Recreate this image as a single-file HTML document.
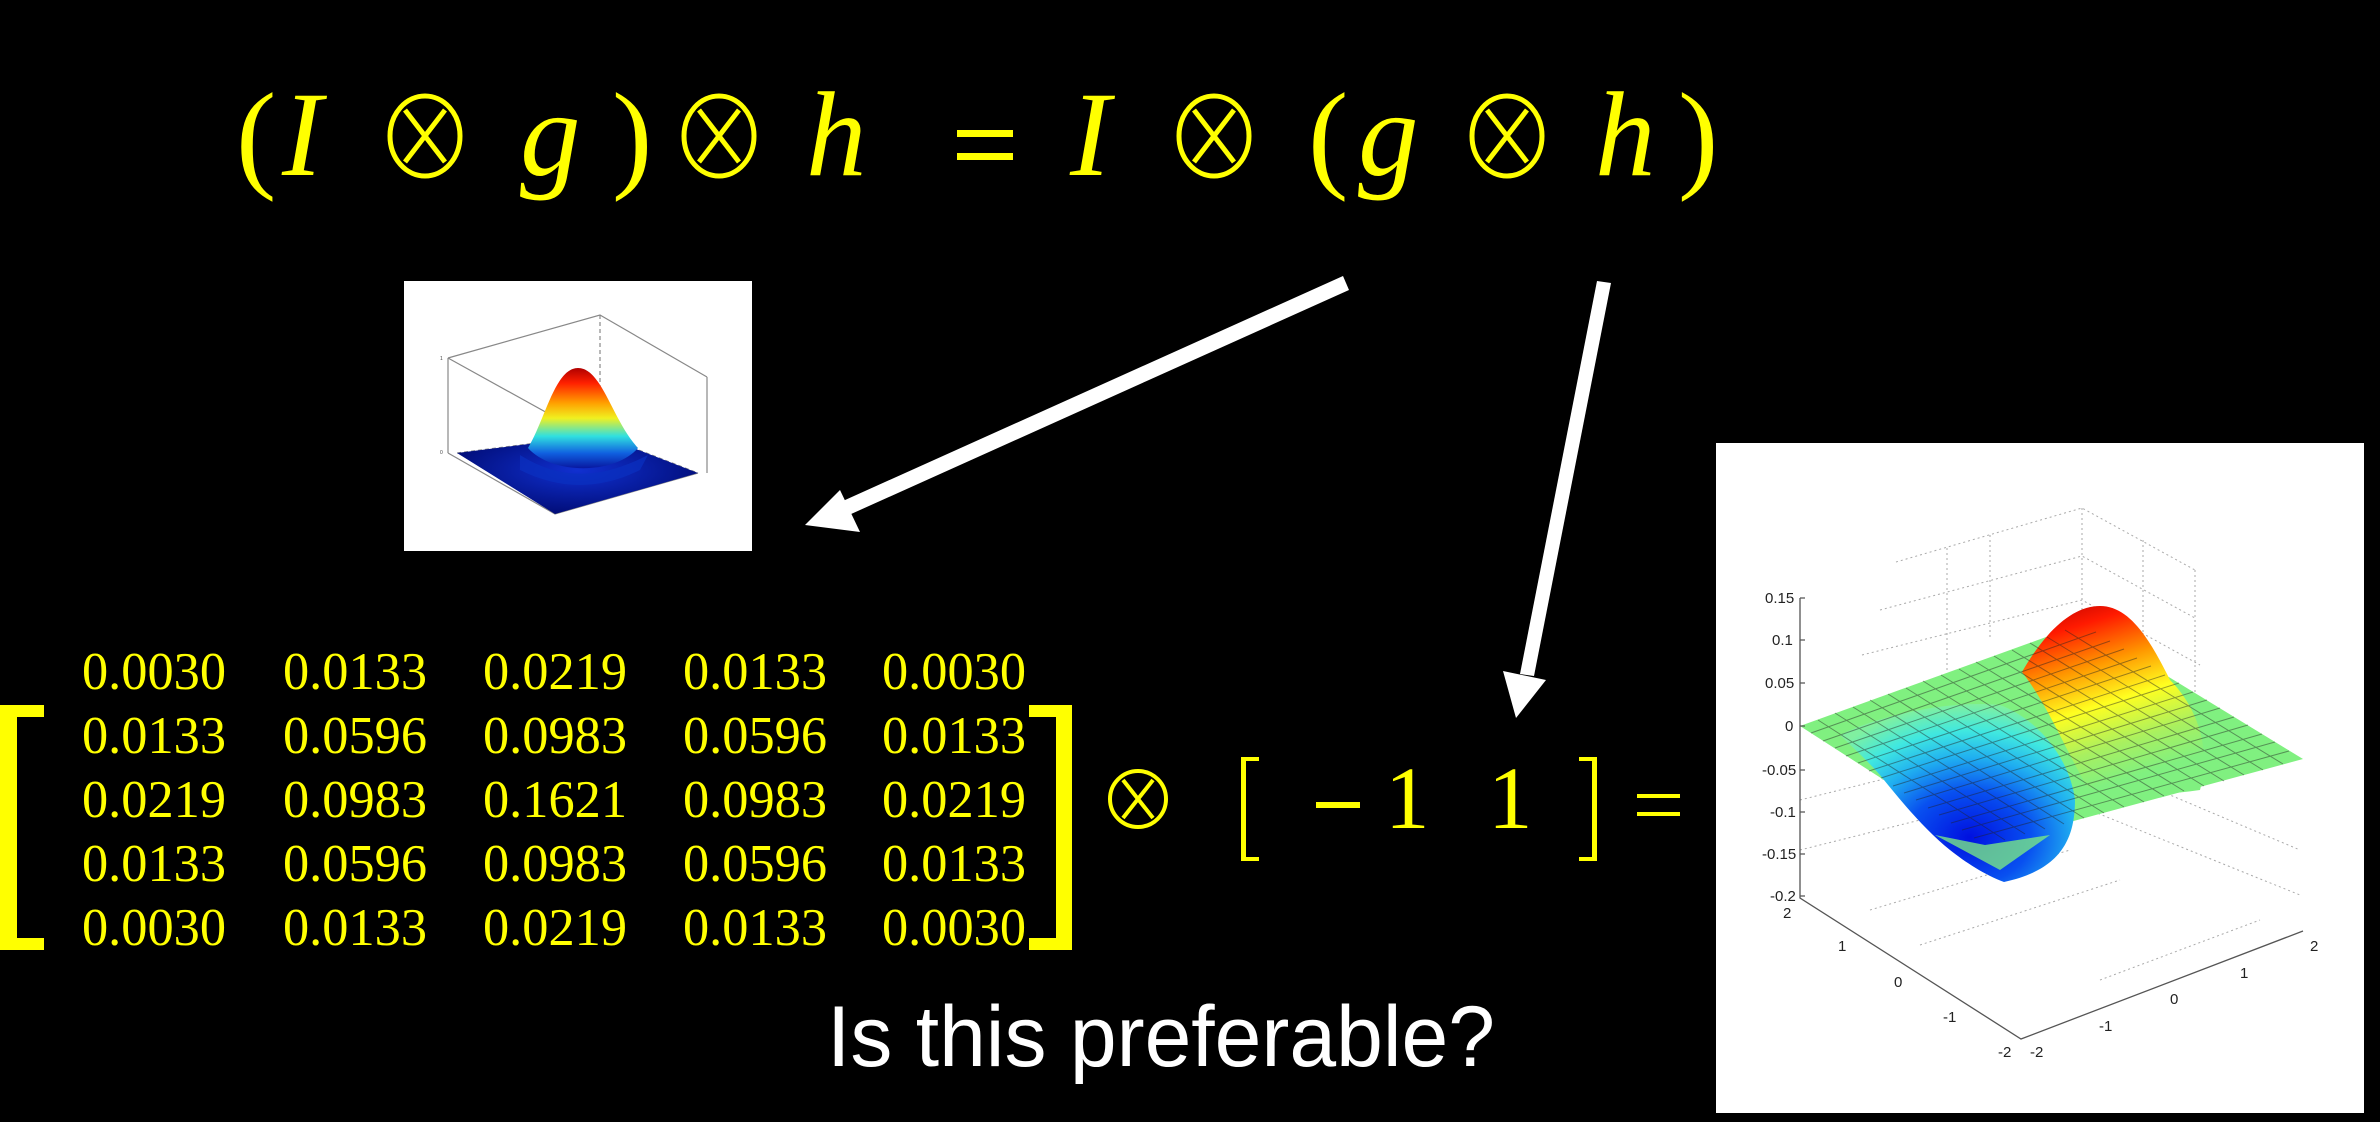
<!DOCTYPE html>
<html><head><meta charset="utf-8"><style>
html,body{margin:0;padding:0;background:#000;}
svg{display:block}
</style></head><body>
<svg width="2380" height="1122" viewBox="0 0 2380 1122" xmlns="http://www.w3.org/2000/svg">
<defs>
<linearGradient id="peak" x1="0" y1="0" x2="0.3" y2="1">
<stop offset="0" stop-color="#b80000"/><stop offset="0.18" stop-color="#ff1a00"/><stop offset="0.4" stop-color="#ff9900"/><stop offset="0.6" stop-color="#ffff20"/><stop offset="0.82" stop-color="#a8f060"/><stop offset="1" stop-color="#80f080"/>
</linearGradient>
<radialGradient id="trough" cx="0.55" cy="0.75" r="0.75">
<stop offset="0" stop-color="#0010e0"/><stop offset="0.35" stop-color="#0850f0"/><stop offset="0.6" stop-color="#20b0f0"/><stop offset="0.8" stop-color="#40e8e0"/><stop offset="1" stop-color="#80f0a0"/>
</radialGradient>
<linearGradient id="gpeak" x1="0" y1="0" x2="0" y2="1">
<stop offset="0" stop-color="#b00000"/><stop offset="0.15" stop-color="#ff2000"/><stop offset="0.35" stop-color="#ffa000"/><stop offset="0.5" stop-color="#f0f020"/><stop offset="0.68" stop-color="#30e0e0"/><stop offset="0.85" stop-color="#1060e0"/><stop offset="1" stop-color="#0818a0"/>
</linearGradient>
<radialGradient id="gbase" cx="0.5" cy="0.45" r="0.6">
<stop offset="0" stop-color="#1030d0"/><stop offset="1" stop-color="#000a70"/>
</radialGradient>
</defs>
<rect width="2380" height="1122" fill="#000"/>

<g fill="#ffff00" font-family="Liberation Serif, serif" font-size="121">
<text x="236" y="176">(</text>
<text x="282" y="175" font-style="italic">I</text>
<text x="520" y="175" font-style="italic">g</text>
<text x="612" y="176">)</text>
<text x="806" y="175" font-style="italic">h</text>
<text x="1070" y="175" font-style="italic">I</text>
<text x="1308" y="176">(</text>
<text x="1358" y="175" font-style="italic">g</text>
<text x="1595" y="175" font-style="italic">h</text>
<text x="1678" y="176">)</text>
</g>
<g fill="#ffff00">
<rect x="957" y="130" width="56" height="7"/><rect x="957" y="153" width="56" height="7"/>
</g>
<g fill="none" stroke="#ffff00" stroke-width="5">
<ellipse cx="425" cy="136" rx="35" ry="40"/><path d="M405 110 L445 162 M445 110 L405 162"/>
<ellipse cx="719" cy="136" rx="35" ry="40"/><path d="M699 110 L739 162 M739 110 L699 162"/>
<ellipse cx="1214" cy="136" rx="35" ry="40"/><path d="M1194 110 L1234 162 M1234 110 L1194 162"/>
<ellipse cx="1507" cy="136" rx="35" ry="40"/><path d="M1487 110 L1527 162 M1527 110 L1487 162"/>
</g>

<g fill="#fff">
<polygon points="1343,276 1349,290 840,519 834,505"/>
<polygon points="805,525 840,490 860,532"/>
<polygon points="1597,281 1611,283 1534,676 1520,674"/>
<polygon points="1516,718 1503,671 1546,680"/>
</g>

<rect x="404" y="281" width="348" height="270" fill="#fff"/>
<g stroke="#888" stroke-width="1.2" fill="none">
<path d="M448 358 L600 315 L707 377 M448 358 L448 453 M707 377 L707 473 M448 358 L578 430"/>
<path d="M600 315 L600 435" stroke-dasharray="4 3"/>
<path d="M600 435 L698 473 M600 435 L457 453" stroke-dasharray="4 3"/>
<path d="M448 453 L555 514 L698 473"/>
</g>
<polygon points="457,453 600,435 698,473 555,514" fill="url(#gbase)"/>
<path d="M528 448 C545 420 555 368 578 368 C602 368 612 420 638 448 C615 475 552 475 528 448 Z" fill="url(#gpeak)"/>
<path d="M520 455 C560 480 600 480 648 455 L640 470 C600 490 560 490 520 470 Z" fill="#0a30c0" opacity="0.7"/>
<g fill="#444" font-family="Liberation Sans, sans-serif" font-size="5">
<text x="440" y="360">1</text><text x="440" y="454">0</text>
</g>

<g fill="#ffff00">
<rect x="0" y="705" width="17" height="245"/><rect x="0" y="705" width="44" height="12"/><rect x="0" y="938" width="44" height="12"/>
<rect x="1056" y="705" width="16" height="245"/><rect x="1029" y="705" width="43" height="12"/><rect x="1029" y="938" width="43" height="12"/>
</g>
<g fill="#ffff00" font-family="Liberation Serif, serif" font-size="53" lengthAdjust="spacingAndGlyphs">
<text y="689" x="82" textLength="144" lengthAdjust="spacingAndGlyphs">0.0030</text>
<text y="689" x="283" textLength="144" lengthAdjust="spacingAndGlyphs">0.0133</text>
<text y="689" x="483" textLength="144" lengthAdjust="spacingAndGlyphs">0.0219</text>
<text y="689" x="683" textLength="144" lengthAdjust="spacingAndGlyphs">0.0133</text>
<text y="689" x="882" textLength="144" lengthAdjust="spacingAndGlyphs">0.0030</text>
<text y="753" x="82" textLength="144" lengthAdjust="spacingAndGlyphs">0.0133</text>
<text y="753" x="283" textLength="144" lengthAdjust="spacingAndGlyphs">0.0596</text>
<text y="753" x="483" textLength="144" lengthAdjust="spacingAndGlyphs">0.0983</text>
<text y="753" x="683" textLength="144" lengthAdjust="spacingAndGlyphs">0.0596</text>
<text y="753" x="882" textLength="144" lengthAdjust="spacingAndGlyphs">0.0133</text>
<text y="817" x="82" textLength="144" lengthAdjust="spacingAndGlyphs">0.0219</text>
<text y="817" x="283" textLength="144" lengthAdjust="spacingAndGlyphs">0.0983</text>
<text y="817" x="483" textLength="144" lengthAdjust="spacingAndGlyphs">0.1621</text>
<text y="817" x="683" textLength="144" lengthAdjust="spacingAndGlyphs">0.0983</text>
<text y="817" x="882" textLength="144" lengthAdjust="spacingAndGlyphs">0.0219</text>
<text y="881" x="82" textLength="144" lengthAdjust="spacingAndGlyphs">0.0133</text>
<text y="881" x="283" textLength="144" lengthAdjust="spacingAndGlyphs">0.0596</text>
<text y="881" x="483" textLength="144" lengthAdjust="spacingAndGlyphs">0.0983</text>
<text y="881" x="683" textLength="144" lengthAdjust="spacingAndGlyphs">0.0596</text>
<text y="881" x="882" textLength="144" lengthAdjust="spacingAndGlyphs">0.0133</text>
<text y="945" x="82" textLength="144" lengthAdjust="spacingAndGlyphs">0.0030</text>
<text y="945" x="283" textLength="144" lengthAdjust="spacingAndGlyphs">0.0133</text>
<text y="945" x="483" textLength="144" lengthAdjust="spacingAndGlyphs">0.0219</text>
<text y="945" x="683" textLength="144" lengthAdjust="spacingAndGlyphs">0.0133</text>
<text y="945" x="882" textLength="144" lengthAdjust="spacingAndGlyphs">0.0030</text>
</g>

<g fill="none" stroke="#ffff00" stroke-width="4">
<ellipse cx="1138" cy="799" rx="28" ry="28"/><path d="M1123 780 L1153 818 M1153 780 L1123 818"/>
</g>
<g fill="#ffff00">
<rect x="1241" y="757" width="5" height="104"/><rect x="1241" y="757" width="18" height="4"/><rect x="1241" y="857" width="18" height="4"/>
<rect x="1592" y="757" width="5" height="104"/><rect x="1579" y="757" width="18" height="4"/><rect x="1579" y="857" width="18" height="4"/>
<rect x="1316" y="802" width="44" height="6"/>
<rect x="1637" y="794" width="43" height="4"/><rect x="1637" y="812" width="43" height="4"/>
</g>
<g fill="#ffff00" font-family="Liberation Serif, serif" font-size="89">
<text x="1385" y="828">1</text><text x="1488" y="828">1</text>
</g>

<text x="827" y="1066" fill="#fff" font-family="Liberation Sans, sans-serif" font-size="86" textLength="668" lengthAdjust="spacingAndGlyphs">Is this preferable?</text>

<rect x="1716" y="443" width="648" height="670" fill="#fff"/>
<g stroke="#aaa" stroke-width="1" stroke-dasharray="2 3" fill="none">
<path d="M1896 562 L2082 508 L2195 570"/>
<path d="M1880 610 L2082 556 L2195 618"/>
<path d="M1862 655 L2082 600 L2200 665"/>
<path d="M2082 508 L2082 624 M1947 548 L1947 670 M1990 535 L1990 640 M2143 540 L2143 660 M2195 570 L2195 700"/>
<path d="M1800 800 L2040 740 L2300 850"/>
<path d="M1800 850 L2040 790 L2300 895"/>
<path d="M1870 910 L2070 850 M1920 945 L2120 880 M2100 980 L2260 920"/>
</g>
<polygon points="1800,726 2082,624 2303,759 1985,845" fill="#80f080"/>
<path d="M1840 735 C1880 715 1950 700 2000 705 C2040 720 2070 760 2075 800 C2075 840 2060 870 2004 882 C1985 875 1965 862 1950 850 C1925 830 1900 800 1880 775 C1865 758 1850 745 1840 735 Z" fill="url(#trough)"/>
<path d="M2022 672 C2045 632 2072 606 2100 606 C2130 606 2150 640 2170 680 C2195 705 2212 745 2200 790 C2160 796 2115 796 2088 788 C2068 755 2048 705 2022 672 Z" fill="url(#peak)"/>
<g stroke="#222" stroke-width="1" opacity="0.45">
<path d="M1818 720 L2005 840 M1835 713 L2025 834 M1853 707 L2045 829 M1870 700 L2064 824 M1888 694 L2084 818 M1906 688 L2104 813 M1923 681 L2124 807 M1941 675 L2144 802 M1959 669 L2164 796 M1976 662 L2184 791 M1994 656 L2204 786 M2012 650 L2224 781 M2030 643 L2244 775 M2047 637 L2263 770 M2065 630 L2283 764"/>
<path d="M1811 733 L2096 632 M1823 741 L2110 641 M1835 748 L2124 649 M1846 756 L2137 658 M1858 763 L2151 666 M1869 771 L2165 675 M1881 778 L2179 683 M1893 786 L2193 692 M1904 793 L2207 700 M1916 800 L2220 708 M1928 808 L2234 717 M1939 815 L2248 725 M1951 823 L2262 734 M1962 830 L2275 742 M1974 838 L2289 751"/>
</g>
<polygon points="1935,835 1985,845 2050,835 2000,870" fill="#80f080" opacity="0.75"/>
<g stroke="#555" stroke-width="1.3" fill="none">
<path d="M1800 598 L1800 898 L2021 1039 L2303 931"/>
<path d="M1800 598 h5 M1800 640 h5 M1800 683 h5 M1800 726 h5 M1800 770 h5 M1800 812 h5 M1800 854 h5 M1800 896 h5"/>
</g>
<g fill="#222" font-family="Liberation Sans, sans-serif" font-size="15">
<text x="1765" y="603">0.15</text><text x="1772" y="645">0.1</text><text x="1765" y="688">0.05</text><text x="1785" y="731">0</text>
<text x="1762" y="775">-0.05</text><text x="1770" y="817">-0.1</text><text x="1762" y="859">-0.15</text><text x="1770" y="901">-0.2</text>
<text x="1783" y="918">2</text><text x="1838" y="951">1</text><text x="1894" y="987">0</text><text x="1943" y="1022">-1</text><text x="1998" y="1057">-2</text>
<text x="2030" y="1057">-2</text><text x="2099" y="1031">-1</text><text x="2170" y="1004">0</text><text x="2240" y="978">1</text><text x="2310" y="951">2</text>
</g>
</svg>
</body></html>
